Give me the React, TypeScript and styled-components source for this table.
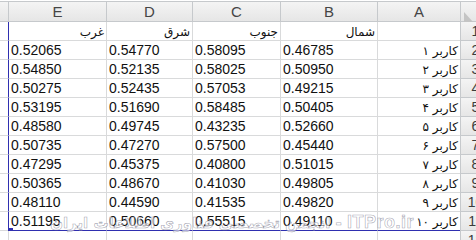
import React from 'react';
import styled, { createGlobalStyle } from 'styled-components';

const GlobalStyle = createGlobalStyle`
  html, body {
    margin: 0;
    padding: 0;
    background: #ffffff;
    overflow: hidden;
  }
`;

// column widths in px, left to right (F strip, E, D, C, B, A)
const COLS = [
  { key: 'F', w: 8 },
  { key: 'E', w: 98 },
  { key: 'D', w: 86 },
  { key: 'C', w: 88 },
  { key: 'B', w: 97 },
  { key: 'A', w: 83 },
];

const LABELS = ['غرب', 'شرق', 'جنوب', 'شمال'];

const DATA: string[][] = [
  ['0.52065', '0.54770', '0.58095', '0.46785'],
  ['0.54850', '0.52135', '0.58025', '0.50950'],
  ['0.50275', '0.52435', '0.57053', '0.49215'],
  ['0.53195', '0.51690', '0.58485', '0.50405'],
  ['0.48580', '0.49745', '0.43235', '0.52660'],
  ['0.50735', '0.47270', '0.57500', '0.45440'],
  ['0.47295', '0.45375', '0.40800', '0.51015'],
  ['0.50365', '0.48670', '0.41030', '0.49805'],
  ['0.48110', '0.44590', '0.41535', '0.49820'],
  ['0.51195', '0.50660', '0.55515', '0.49110'],
];

const FA_DIGITS = ['۰', '۱', '۲', '۳', '۴', '۵', '۶', '۷', '۸', '۹'];
const toFa = (n: number) =>
  String(n)
    .split('')
    .map((d) => FA_DIGITS[Number(d)])
    .join('');

const Page = styled.div`
  position: relative;
  width: 476px;
  height: 240px;
  padding-top: 1px;
  box-sizing: border-box;
  overflow: hidden;
  font-family: 'Liberation Sans', Arial, sans-serif;
`;

const Sheet = styled.div`
  display: flex;
  flex-direction: column;
  width: 490px;
`;

const HeaderRow = styled.div`
  display: flex;
  height: 21px;
  border-top: 1px solid #c6c9cc;
  border-bottom: 1px solid #c6c9cc;
  background: linear-gradient(#f4f4f4, #e6e6e6);
  box-sizing: border-box;
`;

const ColHead = styled.div<{ $w: number; $first?: boolean }>`
  width: ${(p) => p.$w}px;
  flex: none;
  box-sizing: border-box;
  border-left: ${(p) => (p.$first ? 'none' : '1px solid #c6c9cc')};
  display: flex;
  align-items: center;
  justify-content: center;
  font-size: 15px;
  color: #454545;
  line-height: 19px;
`;

const Corner = styled.div`
  width: 30px;
  flex: none;
  box-sizing: border-box;
  border-left: 1px solid #c6c9cc;
  padding: 6px 0 0 3px;
`;

const Row = styled.div`
  display: flex;
  height: 19px;
  box-sizing: border-box;
`;

const Cell = styled.div<{
  $w: number;
  $first?: boolean;
  $align?: 'left' | 'right';
  $selLeft?: boolean;
  $selBottom?: boolean;
}>`
  position: relative;
  width: ${(p) => p.$w}px;
  flex: none;
  box-sizing: border-box;
  border-left: ${(p) =>
    p.$first ? 'none' : p.$selLeft ? '1px solid #2f2fb0' : '1px solid #d9dadb'};
  border-bottom: 1px solid ${(p) => (p.$selBottom ? '#2f2fb0' : '#d9dadb')};
  padding: 0 2px;
  text-align: ${(p) => p.$align || 'left'};
  font-size: 14px;
  line-height: 19px;
  color: #111111;
  white-space: nowrap;
  overflow: hidden;
`;

const FaText = styled.span`
  font-family: 'DejaVu Sans', 'Noto Sans', sans-serif;
  font-size: 12px;
  direction: rtl;
  unicode-bidi: isolate;
  color: #111111;
`;

const RowHead = styled.div`
  width: 30px;
  flex: none;
  box-sizing: border-box;
  border-left: 1px solid #c6c9cc;
  border-bottom: 1px solid #c6c9cc;
  background: linear-gradient(#f4f4f4, #e6e6e6);
  text-align: center;
  font-size: 14px;
  line-height: 18px;
  color: #3c3c3c;
`;

const FillHandle = styled.div`
  position: absolute;
  left: 0;
  bottom: -2px;
  width: 4px;
  height: 4px;
  background: #2f2fb0;
`;

const Watermark = styled.div`
  position: absolute;
  right: 62px;
  top: 212px;
  direction: rtl;
  white-space: nowrap;
  font-family: 'DejaVu Sans', sans-serif;
  font-size: 15px;
  font-weight: bold;
  color: rgba(255, 255, 255, 0.6);
  -webkit-text-stroke: 0.6px rgba(120, 120, 140, 0.65);
  pointer-events: none;
`;

const Latin = styled.span`
  font-family: 'Liberation Sans', Arial, sans-serif;
  font-size: 18px;
  letter-spacing: 0.5px;
`;

function CornerTriangle() {
  return (
    <svg width="9" height="10" viewBox="0 0 9 10">
      <polygon points="0,0 0,10 9,10" fill="#c4c4c4" />
    </svg>
  );
}

export default function App() {
  const rowCount = 12;
  const rows = Array.from({ length: rowCount }, (_, i) => i + 1);

  const renderCell = (rowNo: number, colIdx: number) => {
    const col = COLS[colIdx];
    const isSelected = rowNo <= 11;
    const selLeft = col.key === 'E' && isSelected;
    const selBottom = rowNo === 11 && colIdx >= 1;
    let content: React.ReactNode = null;
    let align: 'left' | 'right' = 'left';

    if (colIdx >= 1 && colIdx <= 4) {
      if (rowNo === 1) {
        content = <FaText>{LABELS[colIdx - 1]}</FaText>;
        align = 'right';
      } else if (rowNo >= 2 && rowNo <= 11) {
        content = DATA[rowNo - 2][colIdx - 1];
      }
    } else if (colIdx === 5 && rowNo >= 2 && rowNo <= 11) {
      content = <FaText>{`کاربر ${toFa(rowNo - 1)}`}</FaText>;
      align = 'right';
    }

    return (
      <Cell
        key={col.key}
        $w={col.w}
        $first={colIdx === 0}
        $align={align}
        $selLeft={selLeft}
        $selBottom={selBottom}
      >
        {content}
        {selBottom && col.key === 'E' && <FillHandle />}
      </Cell>
    );
  };

  return (
    <>
      <GlobalStyle />
      <Page>
        <Sheet>
          <HeaderRow>
            {COLS.map((c, i) => (
              <ColHead key={c.key} $w={c.w} $first={i === 0}>
                {i === 0 ? '' : c.key}
              </ColHead>
            ))}
            <Corner>
              <CornerTriangle />
            </Corner>
          </HeaderRow>
          {rows.map((r) => (
            <Row key={r}>
              {COLS.map((_, ci) => renderCell(r, ci))}
              <RowHead>{r}</RowHead>
            </Row>
          ))}
        </Sheet>
        <Watermark>
          <Latin>ITPro.ir</Latin> - انجمن تخصصی فناوری اطلاعات ایران
        </Watermark>
      </Page>
    </>
  );
}
